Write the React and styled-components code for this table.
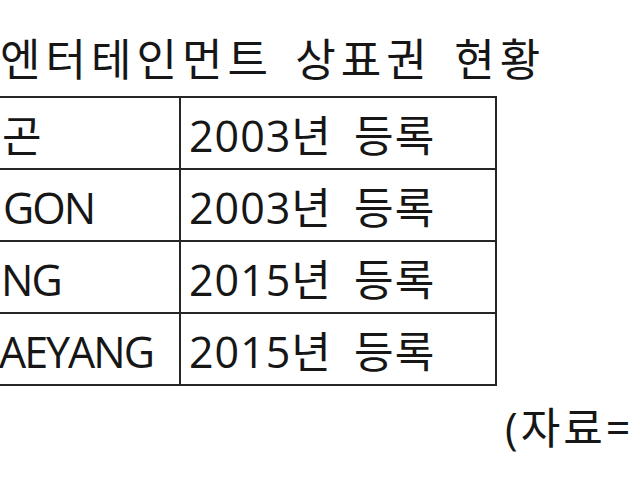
import React from "react";
import styled, { createGlobalStyle } from "styled-components";

const Global = createGlobalStyle`
  html, body { margin: 0; padding: 0; background: #ffffff; }
  body { width: 640px; height: 480px; overflow: hidden; }
  * { box-sizing: border-box; }
`;

const Page = styled.div`
  width: 640px;
  height: 480px;
  overflow: hidden;
  background: #ffffff;
  color: #161616;
  font-family: "Open Sans", "Noto Sans CJK KR", sans-serif;
  display: flex;
  flex-direction: column;
  align-items: flex-start;
`;

const Title = styled.div`
  font-size: 44px;
  line-height: 1;
  padding-top: 37px;
  height: 96px;
  white-space: nowrap;
  letter-spacing: 5px;
  word-spacing: 6px;
`;

const Table = styled.table`
  border-collapse: collapse;
  table-layout: fixed;
  width: 500px;
  margin-left: -5px;
  font-size: 43px;
  line-height: 1;
`;

const Row = styled.tr`
  height: 72px;
`;

const Cell = styled.td`
  border: 2px solid #262626;
  padding: 4px 0 0 ${(p) => p.$pad}px;
  width: ${(p) => p.$w}px;
  white-space: nowrap;
  overflow: hidden;
  vertical-align: middle;
  letter-spacing: ${(p) => p.$ls}px;
  word-spacing: 10px;
`;

const Footer = styled.div`
  font-size: 43px;
  line-height: 1;
  padding-top: 20px;
  padding-left: 505px;
  white-space: nowrap;
  letter-spacing: 3px;
`;

const rows = [
  { name: "곤", date: "2003년 등록", indent: 5 },
  { name: "GON", date: "2003년 등록", indent: 6 },
  { name: "NG", date: "2015년 등록", indent: 4 },
  { name: "AEYANG", date: "2015년 등록", indent: 2 },
];

export default function App() {
  return (
    <Page>
      <Global />
      <Title>엔터테인먼트 상표권 현황</Title>
      <Table>
        <tbody>
          {rows.map((r, i) => (
            <Row key={i}>
              <Cell $w={184} $pad={r.indent} $ls={-2}>{r.name}</Cell>
              <Cell $w={316} $pad={8} $ls={1}>{r.date}</Cell>
            </Row>
          ))}
        </tbody>
      </Table>
      <Footer>(자료=</Footer>
    </Page>
  );
}
